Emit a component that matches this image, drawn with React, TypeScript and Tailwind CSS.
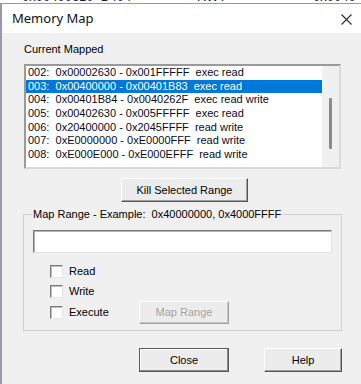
import React from "react";

const rows = [
  "002:  0x00002630 - 0x001FFFFF  exec read",
  "003:  0x00400000 - 0x00401B83  exec read",
  "004:  0x00401B84 - 0x0040262F  exec read write",
  "005:  0x00402630 - 0x005FFFFF  exec read",
  "006:  0x20400000 - 0x2045FFFF  read write",
  "007:  0xE0000000 - 0xE0000FFF  read write",
  "008:  0xE000E000 - 0xE000EFFF  read write",
];

function Btn({
  children,
  className,
  disabled,
  isDefault,
}: {
  children: React.ReactNode;
  className: string;
  disabled?: boolean;
  isDefault?: boolean;
}) {
  return (
    <div
      className={
        "flex items-center justify-center bg-[#ececec] border border-t-white border-l-white " +
        (disabled
          ? "border-r-[#a0a0a0] border-b-[#a0a0a0] text-[#a3a3a3] shadow-[inset_-1px_-1px_0_#c8c8c8] "
          : isDefault
          ? "border-r-[#404040] border-b-[#404040] outline outline-1 outline-[#5a5a5a] -outline-offset-1 shadow-[inset_-1px_-1px_0_#8a8a8a,inset_1px_1px_0_#ffffff] text-black "
          : "border-r-[#555555] border-b-[#555555] shadow-[inset_-1px_-1px_0_#a0a0a0] text-black ") +
        className
      }
    >
      {children}
    </div>
  );
}

function Check({ label }: { label: string }) {
  return (
    <div className="flex items-center">
      <div className="w-[13px] h-[13px] bg-white border border-t-[#7a7a7a] border-l-[#7a7a7a] border-r-[#e6e6e6] border-b-[#e6e6e6] shadow-[inset_1px_1px_0_#c0c0c0]" />
      <span className="ml-[6px] leading-[13px]">{label}</span>
    </div>
  );
}

export default function App() {
  return (
    <div
      className="w-[361px] h-[384px] overflow-hidden flex flex-col bg-white text-[11px] text-black"
      style={{ fontFamily: '"Liberation Sans", Arial, sans-serif' }}
    >
      {/* underlying window strip */}
      <div className="h-[4px] overflow-hidden bg-white border-b border-[#9a9a9a] shrink-0">
        <div className="-mt-[10px] flex text-[13px] leading-[13px] text-[#1a1a40] whitespace-pre">
          <span className="ml-[22px] w-[175px]">0x00400610  B404</span>
          <span className="w-[116px]">RWT</span>
          <span>0x0040</span>
        </div>
      </div>

      {/* dialog */}
      <div className="flex-1 flex flex-col border-l-2 border-[#9b98ab]">
        {/* title bar */}
        <div className="h-[29px] bg-white flex items-center justify-between pl-[10px] pr-[9px] shrink-0">
          <span
            className="text-[13px] text-[#111]"
            style={{ fontFamily: '"Noto Sans", "Open Sans", sans-serif' }}
          >
            Memory Map
          </span>
          <svg width="11" height="11" viewBox="0 0 11 11" className="mt-[1px]">
            <path d="M0.5 0.5 L10.5 10.5 M10.5 0.5 L0.5 10.5" stroke="#2a2a2a" strokeWidth="1.1" />
          </svg>
        </div>

        {/* body */}
        <div className="flex-1 bg-[#f0f0f0] flex flex-col items-start">
          <div className="ml-[22px] mt-[10px] leading-[13px]">Current Mapped</div>

          {/* listbox */}
          <div className="ml-[22px] mt-[8px] w-[317px] h-[105px] border-2 border-t-[#9a9a9a] border-l-[#9a9a9a] border-r-[#dadada] border-b-[#dadada] flex">
            <div className="flex-1 bg-white flex flex-col">
              {rows.map((r, i) => (
                <div
                  key={r}
                  className={
                    "h-[13.67px] leading-[13.67px] pl-[2px] whitespace-pre " +
                    (i === 1 ? "bg-[#0078d7] text-white" : "text-[#0a0a20]")
                  }
                >
                  {r}
                </div>
              ))}
            </div>
            <div className="w-[17px] bg-[#f0f0f0] flex justify-center">
              <div className="mt-[32px] w-[3px] h-[51px] bg-[#8a8a8a] rounded-[1px]" />
            </div>
          </div>

          <Btn className="ml-[119px] mt-[9px] w-[127px] h-[24px]">Kill Selected Range</Btn>

          {/* group box */}
          <fieldset className="ml-[21px] mt-[5px] w-[319px] border border-[#d0d0d0] pb-[6px] flex flex-col items-start">
            <legend className="ml-[8px] px-[1px] leading-[14px] whitespace-pre">
              Map Range - Example:  0x40000000, 0x4000FFFF
            </legend>
            <div className="ml-[9px] mt-[9px] w-[299px] h-[23px] bg-white border border-t-[#7a7a7a] border-l-[#7a7a7a] border-r-[#e3e3e3] border-b-[#e3e3e3] shadow-[inset_1px_1px_0_#b4b4b4]" />
            <div className="ml-[26px] mt-[8px] h-[20px] flex items-center">
              <Check label="Read" />
            </div>
            <div className="ml-[26px] h-[20px] flex items-center">
              <Check label="Write" />
            </div>
            <div className="ml-[26px] h-[23px] flex items-center">
              <div className="w-[89px]">
                <Check label="Execute" />
              </div>
              <Btn disabled className="w-[90px] h-[23px]">
                Map Range
              </Btn>
            </div>
          </fieldset>

          <div className="flex mt-[17px] ml-[137px]">
            <Btn isDefault className="w-[90px] h-[24px]">
              Close
            </Btn>
            <Btn className="ml-[35px] w-[78px] h-[24px]">Help</Btn>
          </div>
        </div>
      </div>
    </div>
  );
}
